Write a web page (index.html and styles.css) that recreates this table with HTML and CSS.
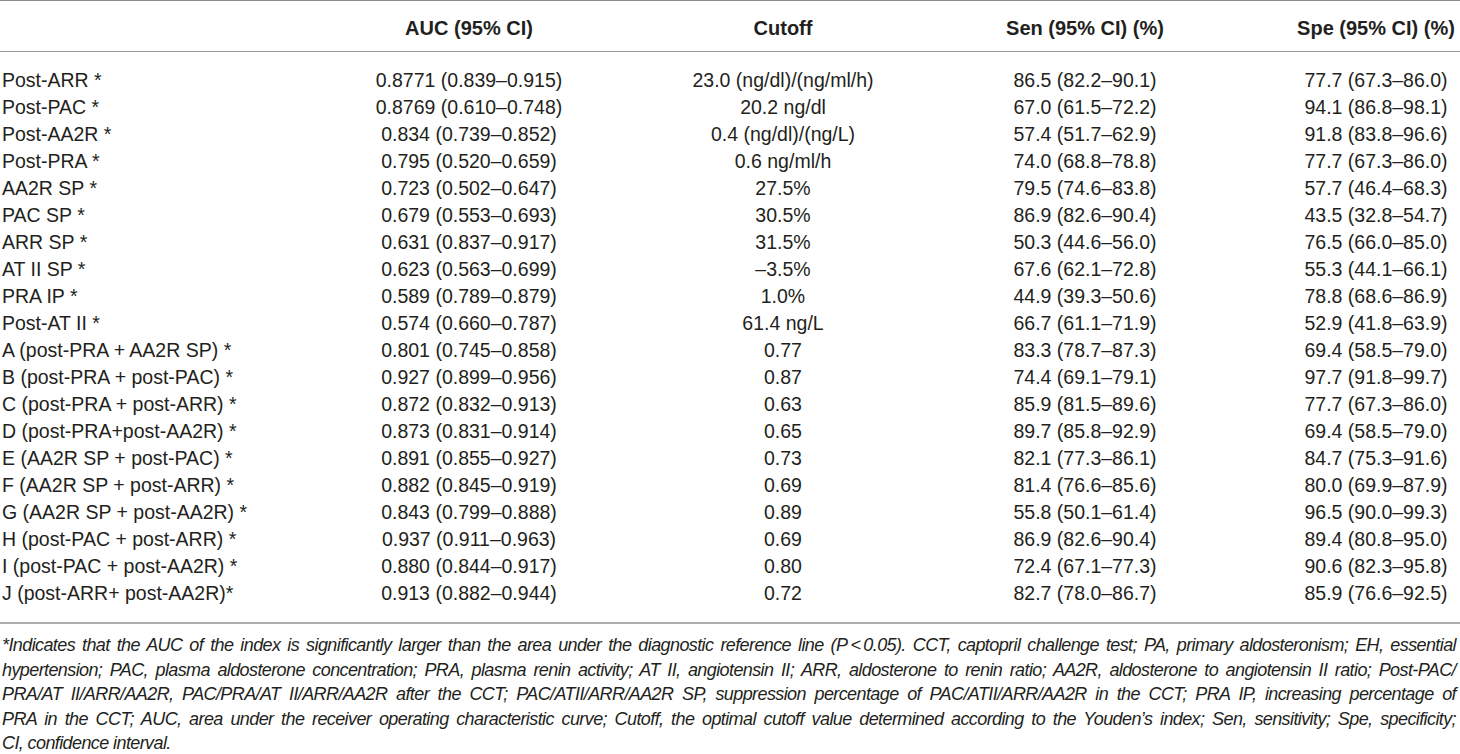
FILE: index.html
```html
<!DOCTYPE html>
<html>
<head>
	<meta charset="utf-8">
	<title>Diagnostic performance of CCT indices</title>
	<link rel="stylesheet" href="styles.css">
</head>
<body>
	<table class="data-table">
		<colgroup>
			<col class="col-name">
			<col class="col-auc">
			<col class="col-cut">
			<col class="col-sen">
			<col class="col-spe">
		</colgroup>
		<thead>
			<tr>
				<th></th>
				<th>AUC (95% CI)</th>
				<th>Cutoff</th>
				<th>Sen (95% CI) (%)</th>
				<th class="spe">Spe (95% CI) (%)</th>
			</tr>
		</thead>
		<tbody>
			<tr><td>Post-ARR *</td><td>0.8771 (0.839–0.915)</td><td>23.0 (ng/dl)/(ng/ml/h)</td><td>86.5 (82.2–90.1)</td><td class="spe">77.7 (67.3–86.0)</td></tr>
			<tr><td>Post-PAC *</td><td>0.8769 (0.610–0.748)</td><td>20.2 ng/dl</td><td>67.0 (61.5–72.2)</td><td class="spe">94.1 (86.8–98.1)</td></tr>
			<tr><td>Post-AA2R *</td><td>0.834 (0.739–0.852)</td><td>0.4 (ng/dl)/(ng/L)</td><td>57.4 (51.7–62.9)</td><td class="spe">91.8 (83.8–96.6)</td></tr>
			<tr><td>Post-PRA *</td><td>0.795 (0.520–0.659)</td><td>0.6 ng/ml/h</td><td>74.0 (68.8–78.8)</td><td class="spe">77.7 (67.3–86.0)</td></tr>
			<tr><td>AA2R SP *</td><td>0.723 (0.502–0.647)</td><td>27.5%</td><td>79.5 (74.6–83.8)</td><td class="spe">57.7 (46.4–68.3)</td></tr>
			<tr><td>PAC SP *</td><td>0.679 (0.553–0.693)</td><td>30.5%</td><td>86.9 (82.6–90.4)</td><td class="spe">43.5 (32.8–54.7)</td></tr>
			<tr><td>ARR SP *</td><td>0.631 (0.837–0.917)</td><td>31.5%</td><td>50.3 (44.6–56.0)</td><td class="spe">76.5 (66.0–85.0)</td></tr>
			<tr><td>AT II SP *</td><td>0.623 (0.563–0.699)</td><td>–3.5%</td><td>67.6 (62.1–72.8)</td><td class="spe">55.3 (44.1–66.1)</td></tr>
			<tr><td>PRA IP *</td><td>0.589 (0.789–0.879)</td><td>1.0%</td><td>44.9 (39.3–50.6)</td><td class="spe">78.8 (68.6–86.9)</td></tr>
			<tr><td>Post-AT II *</td><td>0.574 (0.660–0.787)</td><td>61.4 ng/L</td><td>66.7 (61.1–71.9)</td><td class="spe">52.9 (41.8–63.9)</td></tr>
			<tr><td>A (post-PRA + AA2R SP) *</td><td>0.801 (0.745–0.858)</td><td>0.77</td><td>83.3 (78.7–87.3)</td><td class="spe">69.4 (58.5–79.0)</td></tr>
			<tr><td>B (post-PRA + post-PAC) *</td><td>0.927 (0.899–0.956)</td><td>0.87</td><td>74.4 (69.1–79.1)</td><td class="spe">97.7 (91.8–99.7)</td></tr>
			<tr><td>C (post-PRA + post-ARR) *</td><td>0.872 (0.832–0.913)</td><td>0.63</td><td>85.9 (81.5–89.6)</td><td class="spe">77.7 (67.3–86.0)</td></tr>
			<tr><td>D (post-PRA+post-AA2R) *</td><td>0.873 (0.831–0.914)</td><td>0.65</td><td>89.7 (85.8–92.9)</td><td class="spe">69.4 (58.5–79.0)</td></tr>
			<tr><td>E (AA2R SP + post-PAC) *</td><td>0.891 (0.855–0.927)</td><td>0.73</td><td>82.1 (77.3–86.1)</td><td class="spe">84.7 (75.3–91.6)</td></tr>
			<tr><td>F (AA2R SP + post-ARR) *</td><td>0.882 (0.845–0.919)</td><td>0.69</td><td>81.4 (76.6–85.6)</td><td class="spe">80.0 (69.9–87.9)</td></tr>
			<tr><td>G (AA2R SP + post-AA2R) *</td><td>0.843 (0.799–0.888)</td><td>0.89</td><td>55.8 (50.1–61.4)</td><td class="spe">96.5 (90.0–99.3)</td></tr>
			<tr><td>H (post-PAC + post-ARR) *</td><td>0.937 (0.911–0.963)</td><td>0.69</td><td>86.9 (82.6–90.4)</td><td class="spe">89.4 (80.8–95.0)</td></tr>
			<tr><td>I (post-PAC + post-AA2R) *</td><td>0.880 (0.844–0.917)</td><td>0.80</td><td>72.4 (67.1–77.3)</td><td class="spe">90.6 (82.3–95.8)</td></tr>
			<tr><td>J (post-ARR+ post-AA2R)*</td><td>0.913 (0.882–0.944)</td><td>0.72</td><td>82.7 (78.0–86.7)</td><td class="spe">85.9 (76.6–92.5)</td></tr>
		</tbody>
	</table>

	<!-- footnote lines are kept as in the printed table -->
	<div class="foot-note">
		<span class="ln">*Indicates that the AUC of the index is significantly larger than the area under the diagnostic reference line (<span class="up">P</span>&thinsp;&lt;&thinsp;0.05). CCT, captopril challenge test; PA, primary aldosteronism; EH, essential</span>
		<span class="ln">hypertension; PAC, plasma aldosterone concentration; PRA, plasma renin activity; AT II, angiotensin II; ARR, aldosterone to renin ratio; AA2R, aldosterone to angiotensin II ratio; Post-PAC/</span>
		<span class="ln">PRA/AT II/ARR/AA2R, PAC/PRA/AT II/ARR/AA2R after the CCT; PAC/ATII/ARR/AA2R SP, suppression percentage of PAC/ATII/ARR/AA2R in the CCT; PRA IP, increasing percentage of</span>
		<span class="ln">PRA in the CCT; AUC, area under the receiver operating characteristic curve; Cutoff, the optimal cutoff value determined according to the Youden’s index; Sen, sensitivity; Spe, specificity;</span>
		<span class="ln last">CI, confidence interval.</span>
	</div>
</body>
</html>
```
FILE: styles.css
```css
html, body {
	margin: 0;
	padding: 0;
	background: #fff;
}
body {
	width: 1460px;
	color: #231f20;
	font-family: "Liberation Sans", Arial, sans-serif;
}

.data-table {
	width: 1460px;
	table-layout: fixed;
	border-collapse: collapse;
	border-top: 1.5px solid #8c8c8c;
	border-bottom: 2.5px solid #adadad;
}
.data-table .col-name { width: 312px; }
.data-table .col-auc { width: 314px; }
.data-table .col-cut { width: 314px; }
.data-table .col-sen { width: 290px; }
.data-table .col-spe { width: 230px; }

.data-table th {
	font-size: 20px;
	font-weight: bold;
	line-height: 23px;
	padding: 16px 0 11px;
	text-align: center;
	white-space: nowrap;
	border-bottom: 1.5px solid #9a9a9a;
}
.data-table td {
	font-size: 19.5px;
	line-height: 27px;
	padding: 0;
	text-align: center;
	white-space: nowrap;
}
.data-table td:first-child {
	text-align: left;
	padding-left: 2px;
}
.data-table .spe {
	padding-left: 62px;
}
.data-table tbody tr:first-child td {
	padding-top: 15px;
}
.data-table tbody tr:last-child td {
	padding-bottom: 15px;
}

.foot-note {
	padding: 9px 4px 0 2px;
	font-size: 18px;
	font-style: italic;
	letter-spacing: -0.6px;
	line-height: 24.5px;
}
.foot-note .ln {
	display: block;
	text-align: justify;
	text-align-last: justify;
}
.foot-note .ln.last {
	text-align-last: left;
}
.foot-note .up {
	font-style: italic;
}
```
